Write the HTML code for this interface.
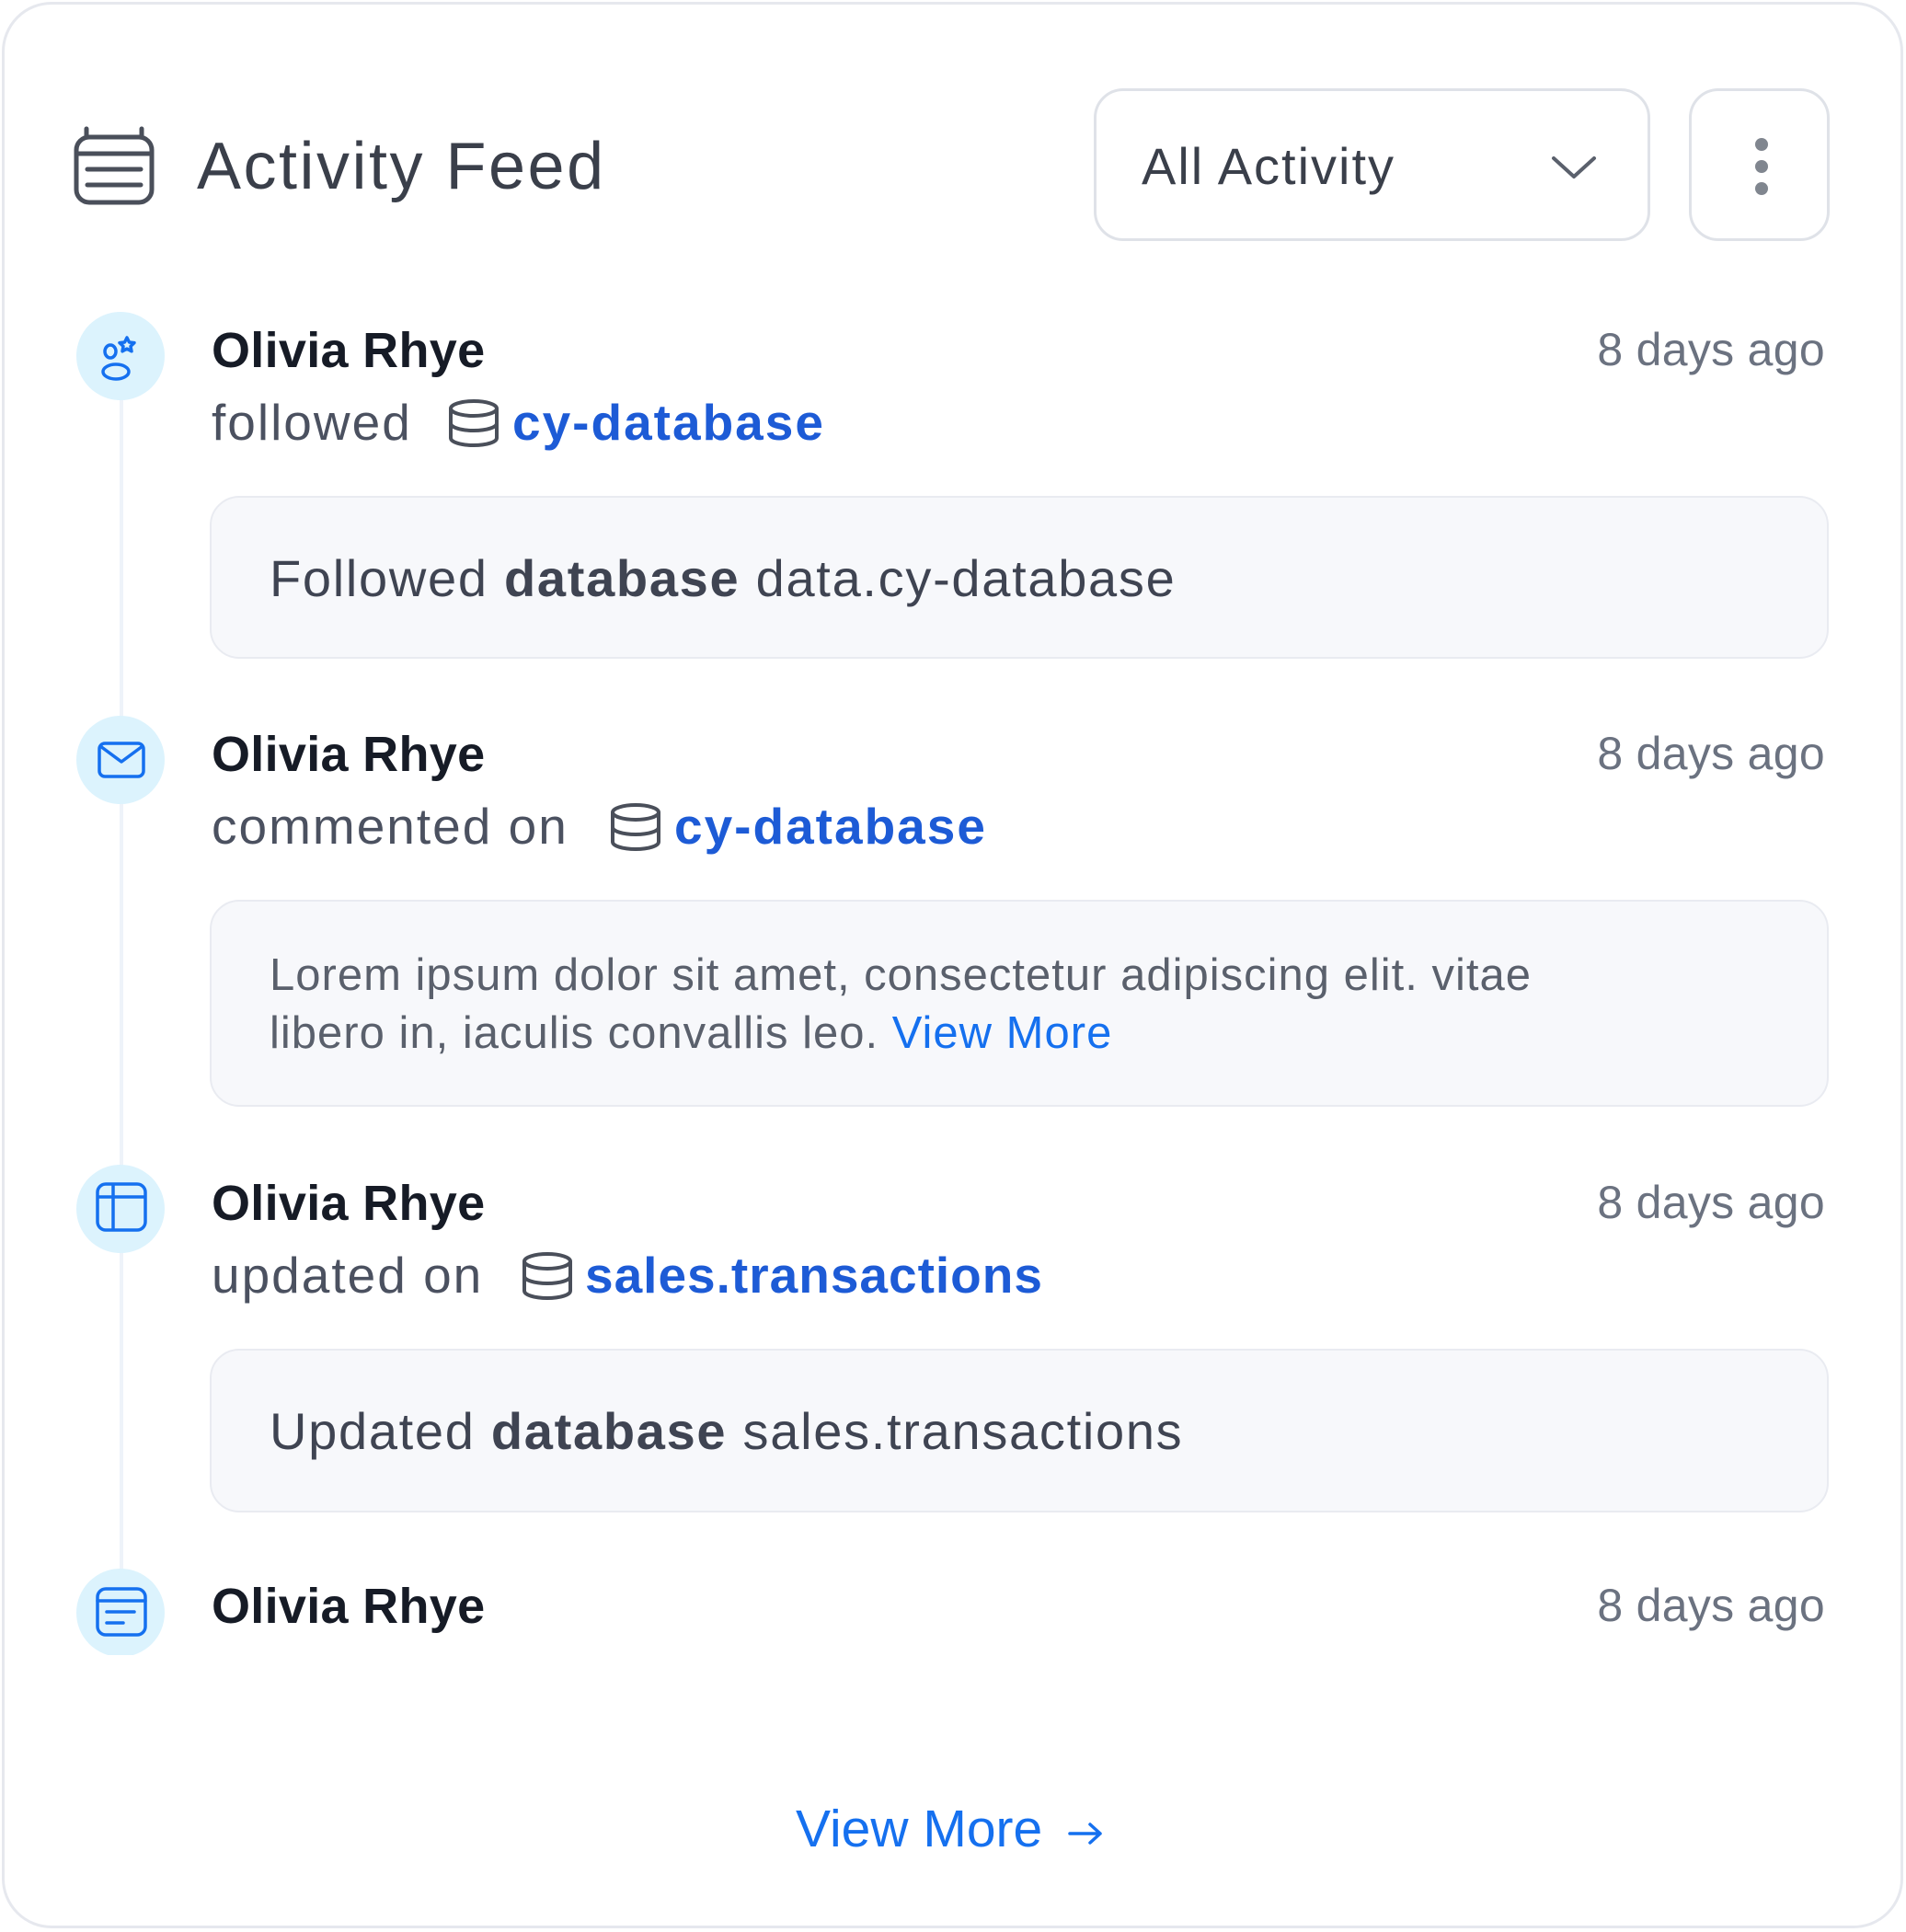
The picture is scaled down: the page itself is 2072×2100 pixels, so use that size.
<!DOCTYPE html>
<html><head><meta charset="utf-8"><style>
*{margin:0;padding:0;box-sizing:border-box}
body{width:2072px;height:2100px;background:#fff;font-family:"Liberation Sans",sans-serif;position:relative;overflow:hidden}
.a{position:absolute;white-space:nowrap;line-height:1}
.card{position:absolute;left:2px;top:2px;width:2067px;height:2094px;border:3px solid #e6e8ee;border-radius:54px}
.box{position:absolute;left:228px;width:1760px;background:#f7f8fb;border:2px solid #e9ebf1;border-radius:32px}
.name{font-size:54px;font-weight:bold;color:#161b26;left:230px;letter-spacing:0.3px}
.time{font-size:50px;color:#6b7280;right:88px;letter-spacing:0.3px}
.act{font-size:55px;color:#4b5160;left:230px;letter-spacing:2px}
.link{color:#1d5bd6;font-weight:bold;letter-spacing:2px}
.circ{position:absolute;left:83px;width:96px;height:96px;border-radius:50%;background:#dcf3fd}
.txt{font-size:56px;color:#3f4452;letter-spacing:1.7px}
</style></head><body>
<div class="card"></div>
<svg class="a" style="left:80px;top:137px" width="88" height="86" viewBox="0 0 88 86" fill="none" stroke="#4a4f5a" stroke-width="5" stroke-linecap="round"><rect x="3" y="12" width="82" height="71" rx="14"/><line x1="14" y1="3" x2="14" y2="12"/><line x1="74" y1="3" x2="74" y2="12"/><line x1="3" y1="30" x2="85" y2="30"/><line x1="15" y1="47" x2="73" y2="47"/><line x1="15" y1="64" x2="73" y2="64"/></svg>
<div class="a" style="left:214px;top:145px;font-size:72px;color:#3a3f4a;letter-spacing:2.5px">Activity Feed</div>
<div class="a" style="left:1189px;top:96px;width:605px;height:166px;border:3px solid #dfe2e8;border-radius:32px"></div>
<div class="a" style="left:1241px;top:153px;font-size:56px;color:#3a3f4a;letter-spacing:2px">All Activity</div>
<svg class="a" style="left:1686px;top:168px" width="50" height="28" viewBox="0 0 50 28" fill="none" stroke="#5a606c" stroke-width="4" stroke-linecap="round" stroke-linejoin="round"><path d="M3 4 L25 24 L47 4"/></svg>
<div class="a" style="left:1836px;top:96px;width:153px;height:166px;border:3px solid #dfe2e8;border-radius:32px"></div>
<svg class="a" style="left:1903px;top:148px" width="24" height="66"><circle cx="12" cy="9" r="7" fill="#80868f"/><circle cx="12" cy="33" r="7" fill="#80868f"/><circle cx="12" cy="57" r="7" fill="#80868f"/></svg>
<div class="a" style="left:130px;top:400px;width:4px;height:1360px;background:#eef3f9"></div>

<!-- item1 -->
<div class="circ" style="top:339px"></div>
<svg class="a" style="left:104px;top:360px" width="56" height="56" viewBox="0 0 56 56" fill="none" stroke="#1570ef" stroke-width="3.5" stroke-linecap="round" stroke-linejoin="round"><ellipse cx="16" cy="22" rx="6" ry="7"/><path d="M34 7 l2.5 5 5.5 .6 -4 3.8 1 5.4 -5 -2.7 -5 2.7 1 -5.4 -4 -3.8 5.5 -.6z"/><ellipse cx="22" cy="44" rx="14" ry="8"/></svg>
<div class="a name" style="top:354px">Olivia Rhye</div>
<div class="a time" style="top:355px">8 days ago</div>
<div class="a act" style="top:432px">followed</div>
<svg class="a" style="left:487px;top:434px" width="56" height="52" viewBox="0 0 56 52" fill="none" stroke="#4a4f5a" stroke-width="4"><ellipse cx="28" cy="10" rx="25" ry="8"/><path d="M3 10v32c0 4.5 11 8 25 8s25-3.5 25-8V10M3 26c0 4.5 11 8 25 8s25-3.5 25-8"/></svg>
<div class="a act link" style="left:557px;top:432px">cy-database</div>
<div class="box" style="top:539px;height:177px"></div>
<div class="a txt" style="left:293px;top:601px">Followed <b>database</b> data.cy-database</div>

<!-- item2 -->
<div class="circ" style="top:778px"></div>
<svg class="a" style="left:106px;top:806px" width="52" height="40" viewBox="0 0 52 40" fill="none" stroke="#1570ef" stroke-width="3.5" stroke-linejoin="round"><rect x="2" y="2" width="48" height="36" rx="6"/><path d="M3 5 L26 22 L49 5"/></svg>
<div class="a name" style="top:793px">Olivia Rhye</div>
<div class="a time" style="top:794px">8 days ago</div>
<div class="a act" style="top:871px">commented on</div>
<svg class="a" style="left:663px;top:873px" width="56" height="52" viewBox="0 0 56 52" fill="none" stroke="#4a4f5a" stroke-width="4"><ellipse cx="28" cy="10" rx="25" ry="8"/><path d="M3 10v32c0 4.5 11 8 25 8s25-3.5 25-8V10M3 26c0 4.5 11 8 25 8s25-3.5 25-8"/></svg>
<div class="a act link" style="left:733px;top:871px">cy-database</div>
<div class="box" style="top:978px;height:225px"></div>
<div class="a" style="left:293px;font-size:49px;color:#5a606c;line-height:63px;top:1029px;letter-spacing:1px">Lorem ipsum dolor sit amet, consectetur adipiscing elit. vitae<br>libero in, iaculis convallis leo. <span style="color:#1570ef">View More</span></div>

<!-- item3 -->
<div class="circ" style="top:1266px"></div>
<svg class="a" style="left:104px;top:1285px" width="56" height="56" viewBox="0 0 56 56" fill="none" stroke="#1570ef" stroke-width="3.5"><rect x="2" y="2" width="52" height="50" rx="9"/><path d="M2 16H54M19 2V52"/></svg>
<div class="a name" style="top:1281px">Olivia Rhye</div>
<div class="a time" style="top:1282px">8 days ago</div>
<div class="a act" style="top:1359px">updated on</div>
<svg class="a" style="left:567px;top:1361px" width="56" height="52" viewBox="0 0 56 52" fill="none" stroke="#4a4f5a" stroke-width="4"><ellipse cx="28" cy="10" rx="25" ry="8"/><path d="M3 10v32c0 4.5 11 8 25 8s25-3.5 25-8V10M3 26c0 4.5 11 8 25 8s25-3.5 25-8"/></svg>
<div class="a act link" style="left:636px;top:1359px;letter-spacing:1px">sales.transactions</div>
<div class="box" style="top:1466px;height:178px"></div>
<div class="a txt" style="left:293px;top:1528px">Updated <b>database</b> sales.transactions</div>

<!-- item4 -->
<div style="position:absolute;left:83px;top:1705px;width:96px;height:94px;overflow:hidden"><div style="width:96px;height:96px;border-radius:50%;background:#dcf3fd"></div></div>
<svg class="a" style="left:104px;top:1725px" width="56" height="54" viewBox="0 0 56 54" fill="none" stroke="#1570ef" stroke-width="3.5" stroke-linecap="round"><rect x="2" y="2" width="52" height="50" rx="9"/><path d="M2 15H54M12 27H42M12 39H30"/></svg>
<div class="a name" style="top:1719px">Olivia Rhye</div>
<div class="a time" style="top:1720px">8 days ago</div>

<div class="a" style="left:865px;top:1960px;font-size:57px;color:#1570ef">View More</div>
<svg class="a" style="left:1160px;top:1978px" width="40" height="30" viewBox="0 0 40 30" fill="none" stroke="#1570ef" stroke-width="3.5" stroke-linecap="round" stroke-linejoin="round"><path d="M3 15H36M25 5L36 15L25 25"/></svg>
</body></html>
